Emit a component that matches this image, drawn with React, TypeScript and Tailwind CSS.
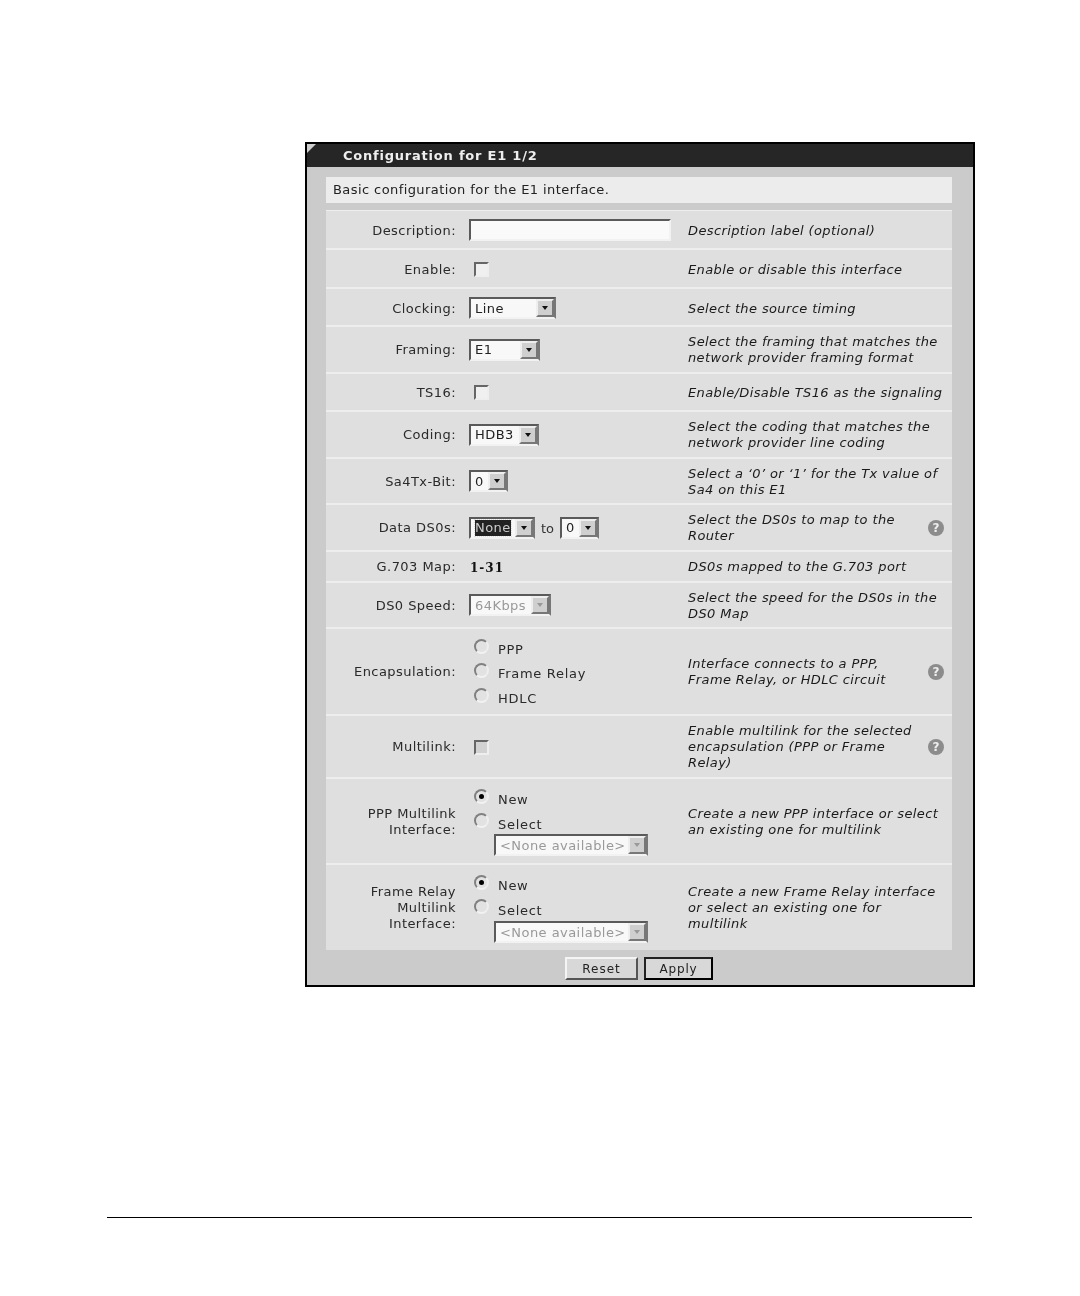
import type { ReactNode } from "react";

const font = "font-['DejaVu_Sans',sans-serif]";

function Select({ text, className, disabled, focused }: { text: string; className: string; disabled?: boolean; focused?: boolean }) {
  return (
    <div className={`flex h-[22px] items-center justify-between border-2 border-t-[#5a5a5a] border-l-[#5a5a5a] border-r-[#777777] border-b-[#f2f2f2] bg-[#f8f8f8] pr-0 pl-[4px] ${className}`}>
      <span className={`mt-[1px] text-[13px] leading-[16px] tracking-[0.45px] whitespace-nowrap ${disabled ? "text-[#999999]" : "text-[#222222]"} ${focused ? "bg-[#222222] !text-[#cccccc] outline-1 outline-dotted outline-[#dddddd]" : ""}`}>{text}</span>
      <span className="flex h-[18px] w-[18px] shrink-0 items-center justify-center border-2 border-t-[#eeeeee] border-l-[#eeeeee] border-r-[#777777] border-b-[#777777] bg-[#cfcfcf]">
        <span className={`h-0 w-0 border-x-[3.5px] border-t-[4px] border-x-transparent ${disabled ? "border-t-[#999999]" : "border-t-[#111111]"}`} />
      </span>
    </div>
  );
}

function Checkbox({ muted }: { muted?: boolean }) {
  return <div className={`mt-[1px] ml-[5px] h-[15px] w-[15px] border-2 border-t-[#666666] border-l-[#666666] border-r-[#eeeeee] border-b-[#eeeeee] ${muted ? "bg-[#d2d2d2]" : "bg-[#f0f0f0]"}`} />;
}

function Radio({ label, checked }: { label: string; checked?: boolean }) {
  return (
    <div className="flex h-[24.5px] items-center">
      <div className="mt-[-6px] ml-[5px] flex h-[15px] w-[15px] items-center justify-center rounded-full border-2 border-t-[#808080] border-l-[#808080] border-r-[#eeeeee] border-b-[#f2f2f2] bg-[#e2e2e2]">
        {checked && <div className="h-[5px] w-[5px] rounded-full bg-black" />}
      </div>
      <span className="mt-[1px] ml-[9px] text-[13px] tracking-[0.7px] text-[#2a2a2a]">{label}</span>
    </div>
  );
}

function Help() {
  return <div className="flex h-[16px] w-[16px] items-center justify-center rounded-full bg-[#8c8c8c] text-[12px] leading-none font-bold text-[#eeeeee]">?</div>;
}

function Row({ height, label, children, desc, help }: { height: string; label: ReactNode; children: ReactNode; desc: ReactNode; help?: boolean }) {
  return (
    <div className={`flex items-center border-t border-t-[#ededed] bg-[#dfdfdf] ${height}`}>
      <div className="mt-[1px] w-[130px] shrink-0 text-right text-[13px] leading-[16px] tracking-[0.45px] text-[#2a2a2a]">{label}</div>
      <div className="ml-[13px] w-[219px] shrink-0">{children}</div>
      <div className="mt-[1px] w-[256px] shrink-0 text-[13px] leading-[16px] tracking-[0.38px] text-[#1a1a1a] italic">{desc}</div>
      {help && <div className="ml-[-16px]"><Help /></div>}
    </div>
  );
}

function MultilinkChoice({ selectClass }: { selectClass: string }) {
  return (
    <div className="mt-[1px]">
      <Radio label="New" checked />
      <Radio label="Select" />
      <div className={`ml-[25px] ${selectClass}`}>
        <Select text="<None available>" className="w-[154px]" disabled />
      </div>
    </div>
  );
}

export default function App() {
  return (
    <div className={`h-[1296px] w-[1080px] overflow-hidden bg-white pt-[142px] pl-[107px] ${font}`}>
      <div className="ml-[198px] h-[845px] w-[670px] border-2 border-black bg-[#cbcbcb] blur-[0.3px]">
        <div className="relative flex h-[23px] items-center bg-[#262626] pl-[36px] text-[13px] font-bold tracking-[0.78px] text-[#eeeeee]">
          <svg className="absolute top-0 left-0" width="9" height="9" viewBox="0 0 9 9">
            <path d="M0 0h9L0 9z" fill="#cfcfcf" />
          </svg>
          Configuration for E1 1/2
        </div>
        <div className="ml-[19px] w-[626px]">
          <div className="mt-[10px] flex h-[26px] items-center bg-[#ececec] pl-[7px] text-[13px] tracking-[0.42px] text-[#222222]">
            Basic configuration for the E1 interface.
          </div>
          <div className="mt-[7px] flex flex-col gap-[1px] bg-[#ededed]">
            <Row height="h-[38px] pt-[2px]" label="Description:" desc="Description label (optional)">
              <div className="mt-[-2px] h-[22px] w-[202px] border-2 border-t-[#5a5a5a] border-l-[#5a5a5a] border-r-[#f2f2f2] border-b-[#f2f2f2] bg-[#fafafa]" />
            </Row>
            <Row height="h-[38px] pt-[2px]" label="Enable:" desc="Enable or disable this interface"><div className="mt-[-2px]"><Checkbox /></div></Row>
            <Row height="h-[37px] pt-[2px]" label="Clocking:" desc="Select the source timing"><Select text="Line" className="w-[87px]" /></Row>
            <Row height="h-[46px]" label="Framing:" desc={<>Select the framing that matches the<br />network provider framing format</>}><Select text="E1" className="w-[71px]" /></Row>
            <Row height="h-[37px]" label="TS16:" desc="Enable/Disable TS16 as the signaling"><Checkbox /></Row>
            <Row height="h-[46px]" label="Coding:" desc={<>Select the coding that matches the<br />network provider line coding</>}><Select text="HDB3" className="w-[70px]" /></Row>
            <Row height="h-[45px]" label="Sa4Tx-Bit:" desc={<>Select a ‘0’ or ‘1’ for the Tx value of<br />Sa4 on this E1</>}><Select text="0" className="w-[39px]" /></Row>
            <Row height="h-[46px]" label="Data DS0s:" help desc={<>Select the DS0s to map to the<br />Router</>}>
              <div className="flex items-center">
                <Select text="None" className="w-[66px]" focused />
                <span className="mx-[6px] mt-[2px] text-[13px] text-[#333333]">to</span>
                <Select text="0" className="w-[39px]" />
              </div>
            </Row>
            <Row height="h-[30px]" label="G.703 Map:" desc="DS0s mapped to the G.703 port">
              <span className="ml-[1px] font-['DejaVu_Serif',serif] text-[12px] font-bold tracking-[1px] text-[#111111]">1-31</span>
            </Row>
            <Row height="h-[45px]" label="DS0 Speed:" desc={<>Select the speed for the DS0s in the<br />DS0 Map</>}><Select text="64Kbps" className="w-[82px]" disabled /></Row>
            <Row height="h-[86px]" label="Encapsulation:" help desc={<>Interface connects to a PPP,<br />Frame Relay, or HDLC circuit</>}>
              <div className="mt-[4px]">
                <Radio label="PPP" />
                <Radio label="Frame Relay" />
                <Radio label="HDLC" />
              </div>
            </Row>
            <Row height="h-[62px]" label="Multilink:" help desc={<>Enable multilink for the selected<br />encapsulation (PPP or Frame<br />Relay)</>}><Checkbox muted /></Row>
            <Row height="h-[85px]" label={<>PPP Multilink<br />Interface:</>} desc={<>Create a new PPP interface or select<br />an existing one for multilink</>}><MultilinkChoice selectClass="mt-[-2px]" /></Row>
            <Row height="h-[86px]" label={<>Frame Relay<br />Multilink<br />Interface:</>} desc={<>Create a new Frame Relay interface<br />or select an existing one for<br />multilink</>}><MultilinkChoice selectClass="mt-[-1px]" /></Row>
          </div>
          <div className="mt-[7px] ml-[239px] flex gap-[6px]">
            <button className="h-[23px] w-[73px] border-2 border-t-[#f4f4f4] border-l-[#f4f4f4] border-r-[#555555] border-b-[#555555] bg-[#d8d8d8] text-[12px] tracking-[1px] text-[#222222]">Reset</button>
            <button className="h-[23px] w-[69px] border-2 border-t-[#222222] border-l-[#222222] border-r-black border-b-black bg-[#d8d8d8] text-[12px] tracking-[0.8px] text-[#222222]">Apply</button>
          </div>
        </div>
      </div>
      <div className="mt-[230px] h-[1px] w-[865px] bg-black" />
    </div>
  );
}
